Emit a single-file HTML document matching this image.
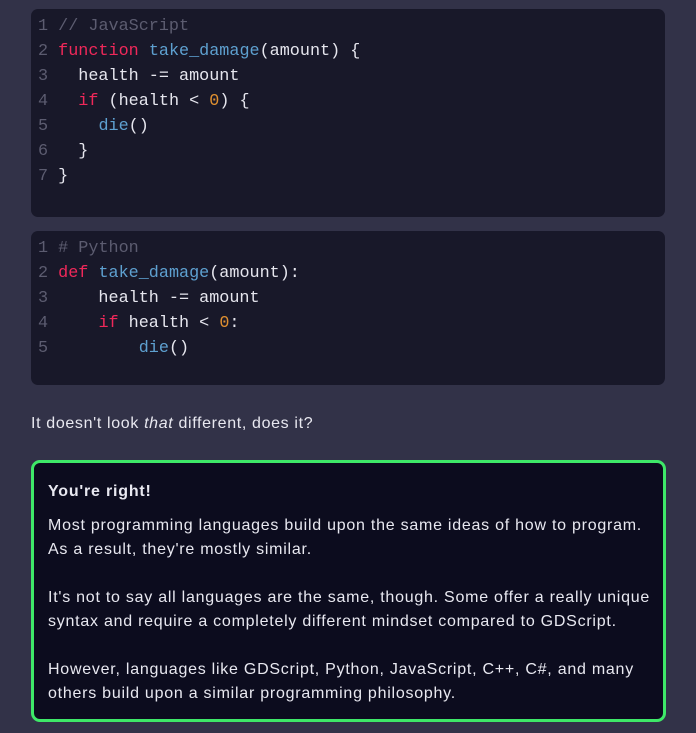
<!DOCTYPE html>
<html><head><style>
body{margin:0;background:#323248;width:696px;height:733px;overflow:hidden;font-family:"Liberation Sans",sans-serif;color:#e8e8f0}
.code{position:absolute;left:31px;width:634px;background:#181829;border-radius:7px;font-family:"Liberation Mono",monospace;font-size:16.8px;line-height:25px;color:#e6e6ee;white-space:pre}
.code div{padding-left:7px}
.n{color:#5c5c70}.c{color:#5c5c70}.k{color:#f0285a}.f{color:#5ea0d0}.o{color:#e09030}
p{margin:0;white-space:nowrap}
</style></head><body>
<div class="code" style="top:9px;height:208px;padding-top:5px;box-sizing:border-box"><div><span class="n">1</span> <span class="c">// JavaScript</span></div><div><span class="n">2</span> <span class="k">function</span> <span class="f">take_damage</span>(amount) {</div><div><span class="n">3</span>   health -= amount</div><div><span class="n">4</span>   <span class="k">if</span> (health &lt; <span class="o">0</span>) {</div><div><span class="n">5</span>     <span class="f">die</span>()</div><div><span class="n">6</span>   }</div><div><span class="n">7</span> }</div></div>
<div class="code" style="top:231px;height:154px;padding-top:5px;box-sizing:border-box"><div><span class="n">1</span> <span class="c"># Python</span></div><div><span class="n">2</span> <span class="k">def</span> <span class="f">take_damage</span>(amount):</div><div><span class="n">3</span>     health -= amount</div><div><span class="n">4</span>     <span class="k">if</span> health &lt; <span class="o">0</span>:</div><div><span class="n">5</span>         <span class="f">die</span>()</div></div>
<p style="position:absolute;left:31px;top:414px;font-size:16px;line-height:20px;letter-spacing:0.65px">It doesn't look <i>that</i> different, does it?</p>
<div style="position:absolute;left:31px;top:460px;width:635px;height:262px;box-sizing:border-box;border:3px solid #3ee868;border-radius:9px;background:#0c0c1e;padding:17px 14px 0 14px;font-size:16px;line-height:24px;letter-spacing:0.75px">
<p style="font-weight:bold;margin-bottom:10px;letter-spacing:0.8px">You're right!</p>
<p>Most programming languages build upon the same ideas of how to program.<br>As a result, they're mostly similar.</p>
<p style="margin-top:24px">It's not to say all languages are the same, though. Some offer a really unique<br>syntax and require a completely different mindset compared to GDScript.</p>
<p style="margin-top:24px">However, languages like GDScript, Python, JavaScript, C++, C#, and many<br>others build upon a similar programming philosophy.</p>
</div>
</body></html>
